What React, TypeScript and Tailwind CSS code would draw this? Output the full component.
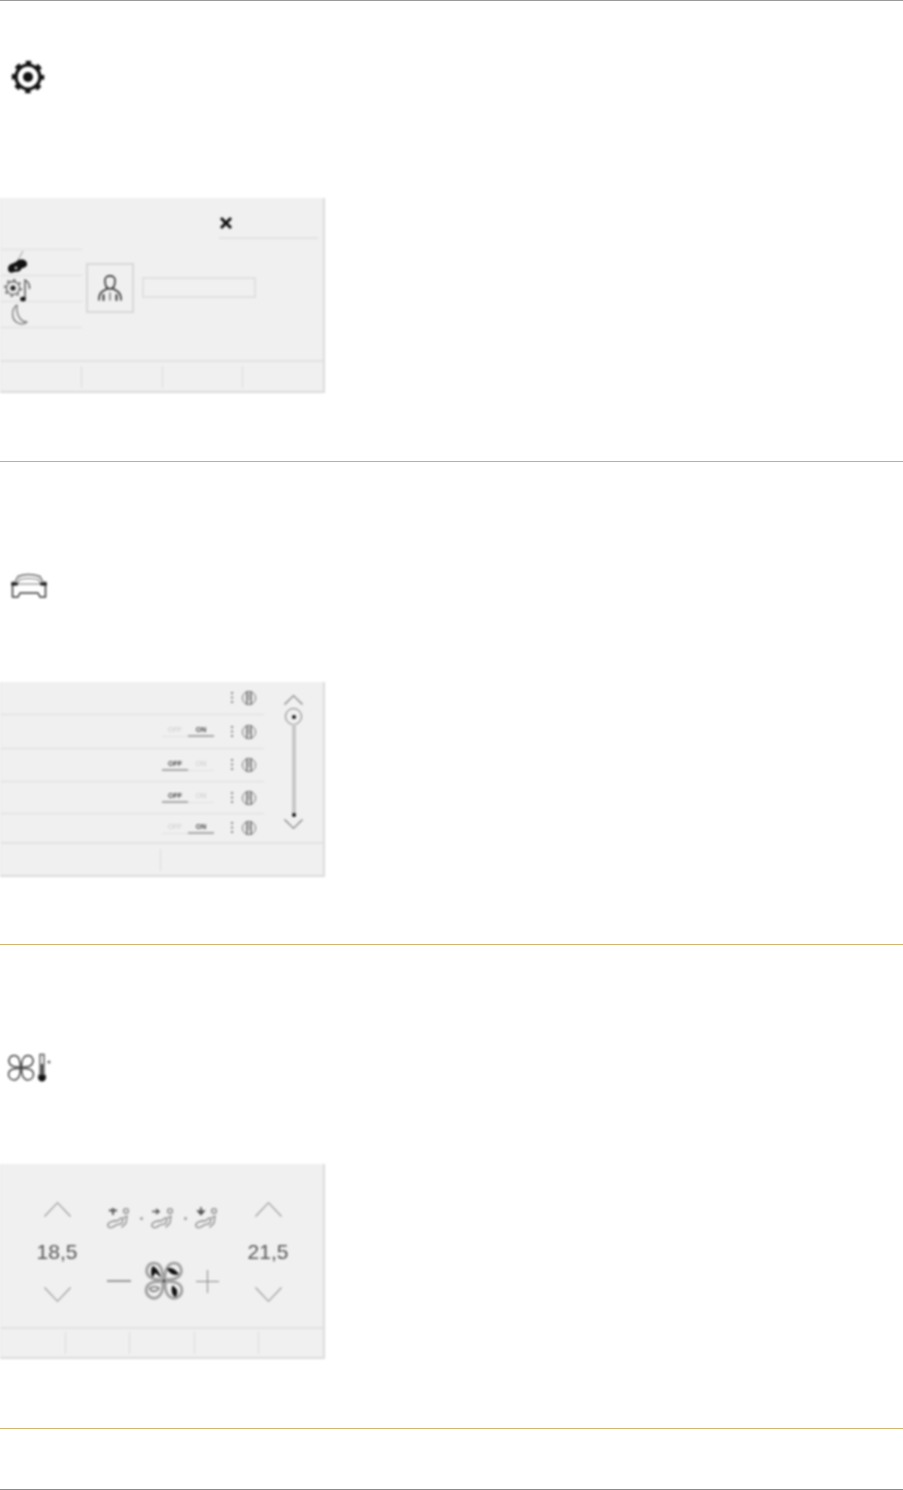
const font = { fontFamily: '"Liberation Sans", Arial, sans-serif' };

function Gear() {
  return (
    <svg width="38" height="38" viewBox="0 0 38 38" className="blur-[0.9px]">
      <circle cx="19" cy="19" r="12" fill="none" stroke="#111" strokeWidth="3.2" />
      <circle cx="19" cy="19" r="14.6" fill="none" stroke="#111" strokeWidth="3.4" strokeDasharray="5.5 5.97" strokeDashoffset="2.75" />
      <circle cx="19" cy="19" r="5" fill="#111" />
    </svg>
  );
}

function Car() {
  return (
    <svg width="40" height="30" viewBox="0 0 40 30" className="blur-[0.9px]">
      <g fill="none" stroke="#333" strokeWidth="1.5" strokeLinecap="round" strokeLinejoin="round">
        <path d="M6 10 L9 4.5 Q19 0.5 31 4.5 L34 10" stroke="#666" />
        <path d="M8 12 L10.5 7.5 Q19 5.5 29.5 7.5 L32 12 Z" strokeWidth="1.1" stroke="#777" />
        <path d="M3.5 10 L3.5 25 L9 25 L11 21 L29 21 L31 25 L36.5 25 L36.5 10" />
        <path d="M3.5 12 L7.5 12 M32.5 12 L36.5 12" stroke="#111" strokeWidth="3" />
      </g>
    </svg>
  );
}

function Petals({ stroke, width }: { stroke: string; width: number }) {
  return (
    <g fill="none" stroke={stroke} strokeWidth={width}>
      <path d="M13.5 13 C13 8 12.5 1.5 7 1.5 C3 1.5 1.5 5 2 8 C3 12 8 13.5 13.5 13 Z" />
      <path d="M14.5 13 C14.5 8 16 1.5 21 1.5 C25 1.5 26.5 5 26 8 C25 12 20 13.5 14.5 13 Z" />
      <path d="M13 14.5 C8 14 1.5 15 1.5 20.5 C1.5 24 5 26.5 8 26 C12 25 14 19.5 13 14.5 Z" />
      <path d="M15 14.5 C20 14 26.5 15 26.5 20.5 C26.5 24 23 26.5 20 26 C16 25 14 19.5 15 14.5 Z" />
    </g>
  );
}

function FanThermo() {
  return (
    <svg width="46" height="32" viewBox="0 0 46 32" className="blur-[0.9px]">
      <g transform="translate(0 2)">
        <Petals stroke="#444" width={1.5} />
        <circle cx="14" cy="14" r="1" fill="#333" />
      </g>
      <path d="M33 2.5 L33 22 A3.6 3.6 0 1 0 37 22 L37 2.5 Z" fill="none" stroke="#555" strokeWidth="1.4" />
      <path d="M35 12 L35 24" stroke="#111" strokeWidth="1.6" />
      <circle cx="35" cy="26" r="3.4" fill="#111" />
      <circle cx="42" cy="10" r="1.5" fill="#666" />
    </svg>
  );
}

function CloseX() {
  return (
    <svg width="14" height="14" viewBox="0 0 14 14">
      <path d="M2 2 L12 12 M12 2 L2 12" stroke="#111" strokeWidth="3" />
    </svg>
  );
}

function Blob() {
  return (
    <svg width="24" height="26" viewBox="0 0 24 26">
      <path d="M13 10 L18 1" stroke="#999" strokeWidth="1" fill="none" />
      <path d="M3 19 C3 13 9 14 12 11 C16 8 23 10 22 15 C21 18 18 17 16 19 C15 23 11 21 9 22 C6 24 3 22 3 19 Z" fill="#111" />
      <circle cx="11" cy="18" r="1.4" fill="#ccc" />
    </svg>
  );
}

function GearNote() {
  return (
    <svg width="30" height="26" viewBox="0 0 30 26">
      <circle cx="11" cy="11" r="6.5" fill="none" stroke="#666" strokeWidth="1.3" />
      <circle cx="11" cy="11" r="8.2" fill="none" stroke="#666" strokeWidth="1.6" strokeDasharray="2.6 3.8" />
      <circle cx="11" cy="11" r="2.6" fill="#222" />
      <path d="M23 21 L23 3 C25 4 28 7 27.5 12" fill="none" stroke="#444" strokeWidth="1.3" />
      <ellipse cx="21" cy="22" rx="2.8" ry="2.3" fill="#111" />
    </svg>
  );
}

function Moon() {
  return (
    <svg width="24" height="24" viewBox="0 0 24 24">
      <path d="M10 2 C4 6 4 17 11 20 C14 21.5 18 21 20 19 C14 19 9 13 10 2 Z" fill="none" stroke="#777" strokeWidth="1.3" strokeLinejoin="round" />
    </svg>
  );
}

function Person() {
  return (
    <svg width="26" height="30" viewBox="0 0 26 30">
      <g fill="none" stroke="#333" strokeWidth="1.6" strokeLinecap="round" strokeLinejoin="round">
        <path d="M8 7 C8 1.5 18 1.5 18 7 C18 11 17 14 15.5 15 C14 16 12 16 10.5 15 C9 14 8 11 8 7 Z" />
        <path d="M15.5 15.5 L20 18 C23 19.5 24 22 24 27" />
        <path d="M10.5 15.5 L6 18 C3 19.5 2 22 2 27" />
        <path d="M6.5 22 L6.5 27 M19.5 22 L19.5 27" stroke="#222" strokeWidth="1.8" />
        <path d="M13 20 L13 27" stroke="#666" strokeWidth="1.3" />
      </g>
    </svg>
  );
}

function Chevron({ up, w, h, color = "#999" }: { up?: boolean; w: number; h: number; color?: string }) {
  return (
    <svg width={w} height={h} viewBox={`0 0 ${w} ${h}`}>
      <path
        d={up ? `M0.5 ${h - 0.5} L${w / 2} 0.7 L${w - 0.5} ${h - 0.5}` : `M0.5 0.5 L${w / 2} ${h - 0.7} L${w - 0.5} 0.5`}
        fill="none"
        stroke={color}
        strokeWidth="1.1"
      />
    </svg>
  );
}

function Level() {
  return (
    <svg width="26" height="16" viewBox="0 0 26 16">
      <path d="M1 2 L1 4 M1 6.5 L1 8.5 M1 11 L1 13" stroke="#888" strokeWidth="2.2" />
      <circle cx="18" cy="8" r="6.6" fill="none" stroke="#777" strokeWidth="1" />
      <path d="M16 1.5 L16 14.5 M20 1.5 L20 14.5" stroke="#555" strokeWidth="1.3" />
      <path d="M18 3 L18 10" stroke="#aaa" strokeWidth="1.2" />
    </svg>
  );
}

function Toggle({ on }: { on: boolean }) {
  const active = "w-[26px] h-[14px] pt-[3px] text-center text-[7px] leading-[8px] font-bold text-[#444] border-b-2 border-[#a8a8a8]";
  const idle = "w-[26px] h-[14px] pt-[3px] text-center text-[7px] leading-[8px] text-[#c8c8c8] border-b border-[#e0e0e0]";
  return (
    <div className="flex items-start -mt-[3px]">
      <div className={on ? idle : active}>OFF</div>
      <div className={on ? active : idle}>ON</div>
    </div>
  );
}

function Row({ h, toggle, last }: { h: string; toggle?: "on" | "off"; last?: boolean }) {
  return (
    <div className={`${h} flex items-center justify-end pr-[7px] ${last ? "" : "border-b border-[#dedede]"}`}>
      {toggle && <Toggle on={toggle === "on"} />}
      <div className="ml-[17px]">
        <Level />
      </div>
    </div>
  );
}

function SeatIcon({ mark }: { mark: "up" | "mid" | "down" }) {
  return (
    <svg width="26" height="24" viewBox="0 0 26 24">
      <g fill="none" stroke="#888" strokeWidth="1.3" strokeLinecap="round" strokeLinejoin="round">
        <path d="M2 20 C1 17 5 15.5 8 15 L12 14.5 L15 12 L17 13 L16 17 C14 19 12 18 10 19 C7 21.5 3 23 2 20 Z" />
        <path d="M17 12 L21 10 L20 17 L16 21" />
        <circle cx="20" cy="5" r="2.4" />
      </g>
      {mark === "up" && <path d="M3 4.5 L11 4.5 M7 2 L7 9" stroke="#555" strokeWidth="1.8" />}
      {mark === "mid" && <path d="M2 5.5 L8 5.5 M6 3 L9 5.5 L6 8" stroke="#555" strokeWidth="1.6" fill="none" />}
      {mark === "down" && <path d="M7 1 L7 5 M4 5 L10 5 L7 8.5 Z" stroke="#555" strokeWidth="1.6" fill="#555" />}
    </svg>
  );
}

function BigFan() {
  return (
    <svg width="40" height="40" viewBox="0 0 28 28" className="overflow-visible">
      <Petals stroke="#a0a0a0" width={2} />
      <path d="M11.5 11 C10 7 8 4 6 4 C5 6 5 9 6 11 L8 8 Z" fill="#111" stroke="#111" strokeWidth="0.6" />
      <path d="M16.5 5.5 C19 4.5 22 6 24 9 C21 10 18 9 16.5 5.5 Z" fill="#111" stroke="#111" strokeWidth="0.6" />
      <path d="M20 17.5 C23 19 24 22 22 25 C20 24 19 21 20 17.5 Z" fill="#111" stroke="#111" strokeWidth="0.6" />
      <path d="M4 19 C7 17.5 9 18 10.5 19 C8.5 22 5 22 4 19 Z" fill="none" stroke="#777" strokeWidth="1.1" />
      <circle cx="14" cy="14" r="0.8" fill="#222" />
    </svg>
  );
}

function Footer({ cols, h, extra = "" }: { cols: number; h: string; extra?: string }) {
  return (
    <div className={`${h} shrink-0 flex items-center border-t-2 border-[#e2e2e2] ${extra}`}>
      {Array.from({ length: cols }).map((_, i) => (
        <div key={i} className={`flex-1 h-[22px] ${i < cols - 1 ? "border-r border-[#dcdcdc]" : ""}`} />
      ))}
    </div>
  );
}

function Panel({ children }: { children: React.ReactNode }) {
  return (
    <div className="w-[325px] h-[195px] flex flex-col bg-[#f0f0f0] border-l border-r-2 border-b-2 border-l-[#e4e4e4] border-r-[#dcdcdc] border-b-[#dcdcdc] blur-[0.9px]">
      {children}
    </div>
  );
}

function TempColumn({ value }: { value: string }) {
  return (
    <div className="w-[30px] flex flex-col items-center">
      <Chevron up w={27} h={15} />
      <div className="mt-[23px] h-[24px] text-[21px] leading-[24px] text-[#555] whitespace-nowrap">{value}</div>
      <div className="mt-[23px]">
        <Chevron w={27} h={15} />
      </div>
    </div>
  );
}

export default function App() {
  return (
    <div className="w-[903px] h-[1490px] bg-white flex flex-col" style={font}>
      <section className="h-[461px] shrink-0 border-t border-[#9a9a9a]">
        <div className="pl-[9px] pt-[57px]">
          <Gear />
        </div>
        <div className="mt-[102px]">
          <Panel>
            <div className="h-[41px] shrink-0 flex items-end justify-end pr-[5px]">
              <div className="w-[99px] h-[33px] border-b-2 border-[#e2e2e2]">
                <div className="pt-[10px]">
                  <CloseX />
                </div>
              </div>
            </div>
            <div className="flex-1 flex">
              <div className="w-[81px] mt-[10px] shrink-0">
                <div className="h-[26px] pl-[4px] border-t border-[#dedede]">
                  <Blob />
                </div>
                <div className="h-[26px] pl-[1px] pt-[1px] border-t border-[#dedede]">
                  <GearNote />
                </div>
                <div className="h-[26px] pl-[6px] pt-[1px] border-t border-[#dedede]">
                  <Moon />
                </div>
                <div className="border-t border-[#dedede]" />
              </div>
              <div className="mt-[24px] ml-[4px] w-[48px] h-[50px] flex items-center justify-center border-2 border-[#d8d8d8]">
                <Person />
              </div>
              <div className="mt-[38px] ml-[8px] w-[114px] h-[21px] border-2 border-[#e0e0e0]" />
            </div>
            <Footer cols={4} h="h-[31px]" />
          </Panel>
        </div>
      </section>

      <section className="h-[483px] shrink-0 border-t border-[#b0b0b0]">
        <div className="pl-[9px] pt-[110px]">
          <Car />
        </div>
        <div className="mt-[80px]">
          <Panel>
            <div className="flex-1 flex min-h-0">
              <div className="w-[263px] shrink-0">
                <Row h="h-[33px]" />
                <Row h="h-[34px]" toggle="on" />
                <Row h="h-[33px]" toggle="off" />
                <Row h="h-[32px]" toggle="off" />
                <Row h="h-[28px]" toggle="on" last />
              </div>
              <div className="flex-1 flex flex-col items-center pt-[13px]">
                <Chevron up w={19} h={10} color="#777" />
                <div className="mt-[3px] w-[17px] h-[17px] rounded-full border border-[#777] flex items-center justify-center">
                  <div className="w-[4px] h-[4px] rounded-full bg-[#111]" />
                </div>
                <div className="w-[4px] h-[91px] bg-[#c8c8c8] -mt-[1px]" />
                <div className="w-[4px] h-[4px] rounded-full bg-[#111] -mt-[2px]" />
                <div className="mt-[2px]">
                  <Chevron w={19} h={10} color="#777" />
                </div>
              </div>
            </div>
            <Footer cols={2} h="h-[33px]" extra="pr-[3px]" />
          </Panel>
        </div>
      </section>

      <section className="h-[484px] shrink-0 border-t border-[#f0b429]">
        <div className="pl-[7px] pt-[107px]">
          <FanThermo />
        </div>
        <div className="mt-[80px]">
          <Panel>
            <div className="flex-1 flex min-h-0 pt-[38px] pl-[41px]">
              <TempColumn value="18,5" />
              <div className="w-[181px] flex flex-col items-center">
                <div className="flex items-center ml-[1px] mt-[4px]">
                  <SeatIcon mark="up" />
                  <div className="w-[3px] h-[3px] rounded-full bg-[#999] ml-[8px] mr-[7px]" />
                  <SeatIcon mark="mid" />
                  <div className="w-[3px] h-[3px] rounded-full bg-[#999] ml-[8px] mr-[7px]" />
                  <SeatIcon mark="down" />
                </div>
                <div className="mt-[31px] flex items-center">
                  <div className="w-[24px] h-[2px] bg-[#999]" />
                  <div className="ml-[13px] mr-[12px]">
                    <BigFan />
                  </div>
                  <div className="relative w-[23px] h-[23px]">
                    <div className="absolute left-0 top-[11px] w-[23px] h-[1px] bg-[#888]" />
                    <div className="absolute left-[11px] top-0 w-[1px] h-[23px] bg-[#888]" />
                  </div>
                </div>
              </div>
              <TempColumn value="21,5" />
            </div>
            <Footer cols={5} h="h-[30px]" />
          </Panel>
        </div>
      </section>

      <section className="h-[61px] shrink-0 border-t border-[#f0b429]" />
      <div className="h-[1px] shrink-0 bg-[#8a8a8a]" />
    </div>
  );
}
